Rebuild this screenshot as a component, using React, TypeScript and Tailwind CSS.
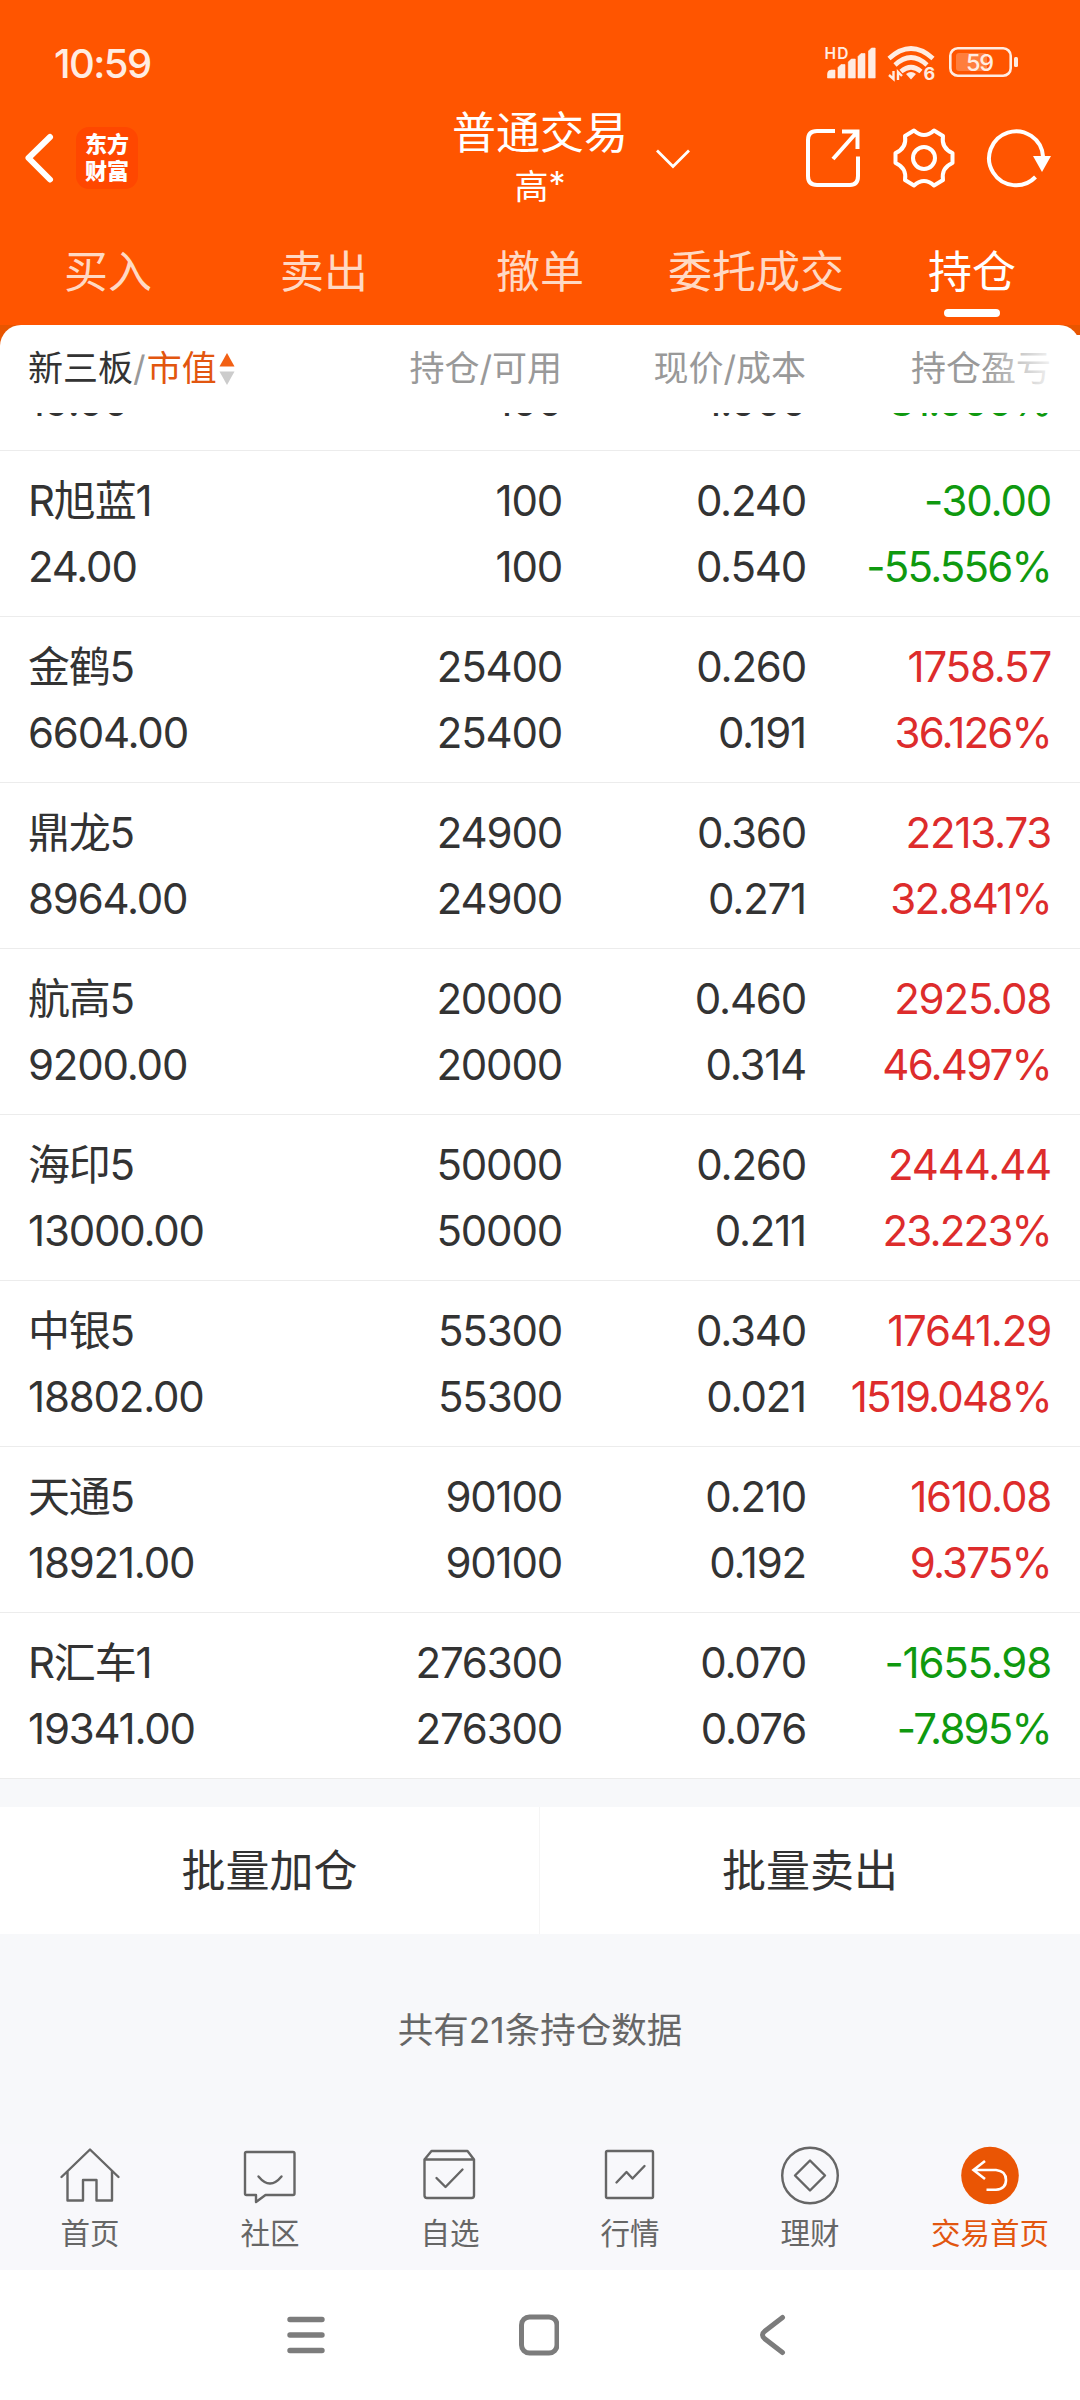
import type { ReactNode } from "react";

type Holding = {
  name: string;
  value: string;
  qty: string;
  available: string;
  price: string;
  cost: string;
  pnl: string;
  pct: string;
};

const HOLDINGS: Holding[] = [
  { name: "R旭蓝1", value: "24.00", qty: "100", available: "100", price: "0.240", cost: "0.540", pnl: "-30.00", pct: "-55.556%" },
  { name: "金鹤5", value: "6604.00", qty: "25400", available: "25400", price: "0.260", cost: "0.191", pnl: "1758.57", pct: "36.126%" },
  { name: "鼎龙5", value: "8964.00", qty: "24900", available: "24900", price: "0.360", cost: "0.271", pnl: "2213.73", pct: "32.841%" },
  { name: "航高5", value: "9200.00", qty: "20000", available: "20000", price: "0.460", cost: "0.314", pnl: "2925.08", pct: "46.497%" },
  { name: "海印5", value: "13000.00", qty: "50000", available: "50000", price: "0.260", cost: "0.211", pnl: "2444.44", pct: "23.223%" },
  { name: "中银5", value: "18802.00", qty: "55300", available: "55300", price: "0.340", cost: "0.021", pnl: "17641.29", pct: "1519.048%" },
  { name: "天通5", value: "18921.00", qty: "90100", available: "90100", price: "0.210", cost: "0.192", pnl: "1610.08", pct: "9.375%" },
  { name: "R汇车1", value: "19341.00", qty: "276300", available: "276300", price: "0.070", cost: "0.076", pnl: "-1655.98", pct: "-7.895%" },
];

const TABS = ["买入", "卖出", "撤单", "委托成交", "持仓"];

const COLS = "grid grid-cols-[290px_244px_244px_245px] pl-[28px] pr-[29px]";

function StatusIcons() {
  return (
    <svg width="196" height="40" viewBox="824 44 196 40" fill="#ffece2">
      <text x="824.5" y="59.5" fontSize="15.5" fontWeight="600" fontFamily="Inter, sans-serif" textLength="24">HD</text>
      <path d="M827.5 79v-4q0-4 4-4h3.500v8zM838 79V68.500l3-3h4V79zM848.300 79V63l3-3h4v19zM858 79V57.500l3-3h4V79zM868.500 79V52l3-3h3.700v30z" stroke="#ffece2" strokeWidth=".6" strokeLinejoin="round" />
      <g fill="none" stroke="#ffece2" strokeWidth="4.6">
        <path d="M889 59.500q22-20 44 0" />
        <path d="M895 66q16-15 32 0" />
        <path d="M901 72.500q10-8.500 20 0" />
      </g>
      <path d="M906 75q5-4 10 0l-5 5.500z" />
      <path d="M893.500 72v8l-4.500-4M898 81v-8l4 4" fill="none" stroke="#ffece2" strokeWidth="2.400" />
      <text x="923.5" y="81" fontSize="18" fontWeight="700" fontFamily="Inter, sans-serif">6</text>
      <rect x="950.300" y="49.300" width="60.400" height="27.400" rx="7.500" fill="none" stroke="#ffece2" strokeWidth="2.600" />
      <rect x="956" y="54" width="31" height="18" rx="3" opacity=".27" />
      <rect x="1014" y="58" width="4" height="10" rx="1.500" />
      <text x="966" y="71.700" fontSize="23.500" fontWeight="500" fontFamily="Inter, sans-serif" textLength="28">59</text>
    </svg>
  );
}

function Header() {
  return (
    <header className="flex h-[325px] flex-col bg-[#ff5500] text-white">
      <div className="flex h-[106px] items-center justify-between pt-[20px] pr-[60px] pl-[54px]">
        <span className="pt-px text-[40px] font-medium tracking-[-1.6px] text-[#ffece2]">10:59</span>
        <StatusIcons />
      </div>
      <div className="grid h-[110px] grid-cols-[1fr_auto_1fr]">
        <div className="flex items-center pb-[6px] pl-[24px]">
          <svg width="32" height="52" viewBox="0 0 32 52" fill="none" stroke="#fff" strokeWidth="6" strokeLinecap="round" strokeLinejoin="round">
            <path d="M26 5 4.500 26l21.500 21.500" />
          </svg>
          <div className="ml-[20px] flex h-[62px] w-[62px] flex-col items-center justify-center rounded-[13px] bg-[#ff4700] text-[22px] leading-[27px] font-black">
            <span>东方</span>
            <span>财富</span>
          </div>
        </div>
        <div className="flex w-[176px] flex-col items-center pt-px">
          <div className="text-[44px] leading-[53px] whitespace-nowrap">普通交易</div>
          <div className="flex text-[34px] leading-[54px]">
            高<span className="-mt-[3px]">*</span>
          </div>
        </div>
        <div className="flex items-center pb-[6px]">
          <svg className="mt-[2px] ml-[28px]" width="34" height="22" viewBox="0 0 34 22" fill="none" stroke="#fff" strokeWidth="2.800">
            <path d="M1 2.500 17 18.500 33 2.500" />
          </svg>
          <svg className="ml-[115px]" width="56" height="60" viewBox="0 0 56 60" fill="none" stroke="#fff" strokeWidth="4">
            <path d="M30 3H12Q3 3 3 12v36q0 9 9 9h33q8 0 8-9V28.500" strokeLinejoin="round" />
            <path d="M37 3.500h15.500V21M52 4 28 31" />
          </svg>
          <svg className="ml-[32px]" width="62" height="60" viewBox="0 0 62 60" fill="none" stroke="#fff" strokeWidth="4" strokeLinejoin="round">
            <path d="M21 2.500q10 9 20 0l9 5.500q-2 12 9.500 17v10q-11.500 5-9.500 17l-9 5.500q-10-9-20 0L12 52q2-12-9.500-17V25Q14 20 12 8z" />
            <circle cx="31" cy="30" r="11" />
          </svg>
          <svg className="ml-[31px]" width="66" height="60" viewBox="0 0 66 60" fill="none">
            <path d="M49.500 49A27 27 0 1 1 57 28.500" stroke="#fff" strokeWidth="4" />
            <path d="M47 28h18l-9 16z" fill="#fff" />
          </svg>
        </div>
      </div>
      <nav className="grid h-[109px] grid-cols-5 pt-[23px]">
        {TABS.map((t) => (
          <button key={t} className="flex flex-col items-center">
            <span className={t === "持仓" ? "text-[44px] leading-[66px] text-white" : "text-[44px] leading-[66px] text-[#ffd9c4]"}>{t}</span>
            {t === "持仓" && <span className="mt-[4px] h-[8px] w-[56px] rounded-full bg-white" />}
          </button>
        ))}
      </nav>
    </header>
  );
}

function ColumnTitles() {
  return (
    <div className="bg-[#e85500]">
      <div className={`relative h-[88px] items-center rounded-t-[21px] bg-white pb-px text-[35px] text-[#999] ${COLS}`}>
        <div className="flex items-center whitespace-nowrap">
          <span className="text-[#333]">新三板</span>
          <span>/</span>
          <span className="ml-px text-[#e2560f]">市值</span>
          <svg className="ml-[2px]" width="16" height="32" viewBox="0 0 16 32">
            <path d="M8 0 15.500 13.500H.5z" fill="#f26014" />
            <path d="M8 32 15.500 18.500H.5z" fill="#ccc" />
          </svg>
        </div>
        <div className="text-right">持仓/可用</div>
        <div className="text-right">现价/成本</div>
        <div className="text-right">持仓盈亏</div>
        <div className="absolute top-[10px] right-0 h-[70px] w-[96px] bg-gradient-to-r from-transparent to-white to-80%" />
      </div>
    </div>
  );
}

function HoldingRow({ h }: { h: Holding }) {
  return (
    <div className={`h-[166px] border-b border-[#ececec] pt-[17px] leading-[66px] ${COLS}`}>
      <div>
        <div>{h.name}</div>
        <div>{h.value}</div>
      </div>
      <div className="text-right">
        <div>{h.qty}</div>
        <div>{h.available}</div>
      </div>
      <div className="text-right">
        <div>{h.price}</div>
        <div>{h.cost}</div>
      </div>
      <div className={h.pnl.startsWith("-") ? "text-right text-[#0f990f]" : "text-right text-[#dd2c2c]"}>
        <div>{h.pnl}</div>
        <div className="tracking-[-1.8px]">{h.pct}</div>
      </div>
    </div>
  );
}

function NavItem({ label, active, children }: { label: string; active?: boolean; children: ReactNode }) {
  return (
    <button className={active ? "flex flex-col items-center text-[#e2560f]" : "flex flex-col items-center text-[#666]"}>
      <svg width="64" height="64" viewBox="0 0 64 64" fill="none" stroke="currentColor" strokeWidth="2.400" strokeLinecap="round" strokeLinejoin="round">
        {children}
      </svg>
      <span className="mt-[3px] text-[29.500px] leading-[44px]">{label}</span>
    </button>
  );
}

function BottomNav() {
  return (
    <nav className="grid h-[126px] grid-cols-6 bg-[#f8f8fb]">
      <NavItem label="首页">
        <path d="M3.500 33 32 5.500 60.500 33M9.500 27.500v29H25V36h13.500v20.500h15.500v-29" />
      </NavItem>
      <NavItem label="社区">
        <path d="M8.500 8H55q1.500 0 1.500 1.500v40q0 1.500-1.500 1.500H27.500l-9.500 7V51H8.500Q7 51 7 49.500v-40Q7 8 8.500 8z" />
        <path d="M20.500 32.500q11.500 14 23 0" />
      </NavItem>
      <NavItem label="自选">
        <path d="M6.500 15.500 13.500 7h36l6.500 8.500v36q0 2.500-2.500 2.500H9q-2.500 0-2.500-2.500zM6.500 15.500H56M18.500 34l9 9L44.500 25.500" />
      </NavItem>
      <NavItem label="行情">
        <rect x="8" y="7" width="47" height="47" rx="1.500" />
        <path d="m18.500 38.500 10-10.500 6 6.500L46.500 22" />
      </NavItem>
      <NavItem label="理财">
        <circle cx="32" cy="31.500" r="27.800" />
        <path d="M32 16.500 47 31.500 32 46.500 17 31.500z" />
      </NavItem>
      <NavItem label="交易首页" active>
        <circle cx="32" cy="31.500" r="28.800" fill="#ea5504" stroke="none" />
        <path d="M27 17 15.500 26 27 35M16 26h22q10 1 10 10t-10 9.800H28.500" stroke="#fff" strokeWidth="2.600" strokeLinecap="butt" strokeLinejoin="miter" />
      </NavItem>
    </nav>
  );
}

function SystemBar() {
  return (
    <div className="flex h-[130px] items-center justify-center gap-[193px] bg-white pr-[2px]">
      <svg width="40" height="42" viewBox="0 0 40 42" stroke="#7c7c7c" strokeWidth="5.400" strokeLinecap="round">
        <path d="M4 5.500h32M4 21h32M4 36.500h32" />
      </svg>
      <svg width="40" height="42" viewBox="0 0 40 42" fill="none" stroke="#7c7c7c" strokeWidth="5">
        <rect x="2.500" y="3" width="35.500" height="36" rx="8" />
      </svg>
      <svg width="40" height="42" viewBox="0 0 40 42" fill="none" stroke="#7c7c7c" strokeWidth="5" strokeLinecap="round">
        <path d="M30.500 3.500 13 17q-5 4 0 8l17.500 13.500" />
      </svg>
    </div>
  );
}

export default function App() {
  return (
    <div className="flex h-[2400px] w-[1080px] flex-col overflow-hidden bg-[#f7f8fa] font-[Inter,'Noto_Sans_CJK_SC',sans-serif] text-[#333]">
      <Header />
      <ColumnTitles />
      <div className="bg-white text-[42px] tracking-[-1.2px]">
        {/* row scrolled halfway under the column titles */}
        <div className="flex h-[38px] flex-col justify-end overflow-hidden border-b border-[#ececec]">
          <div className={`shrink-0 pb-[16px] leading-[66px] ${COLS}`}>
            <div>19.00</div>
            <div className="text-right">100</div>
            <div className="text-right">1.000</div>
            <div className="text-right tracking-[-1.8px] text-[#0f990f]">-81.000%</div>
          </div>
        </div>
        {HOLDINGS.map((h) => (
          <HoldingRow key={h.name} h={h} />
        ))}
      </div>
      <div className="mt-[28px] grid h-[127px] grid-cols-2 bg-white text-[44px]">
        <button className="border-r border-[#f5f5f5]">批量加仓</button>
        <button>批量卖出</button>
      </div>
      <div className="flex h-[210px] items-center justify-center pb-[16px] text-[35.500px] text-[#666]">共有21条持仓数据</div>
      <BottomNav />
      <SystemBar />
    </div>
  );
}
